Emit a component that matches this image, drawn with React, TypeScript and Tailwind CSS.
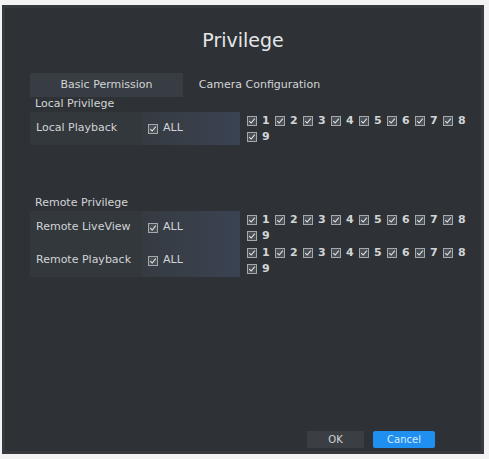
import React from "react";

const channels = [1, 2, 3, 4, 5, 6, 7, 8, 9];

function Check() {
  return (
    <span className="inline-flex h-[10px] w-[10px] shrink-0 items-center justify-center border border-[#a4a9ae] bg-[#4a4f55]">
      <svg viewBox="0 0 10 10" className="h-[8px] w-[8px]">
        <path d="M1.5 5.2 L4 7.5 L8.5 2" fill="none" stroke="#e2e4e6" strokeWidth="1.3" />
      </svg>
    </span>
  );
}

function Row({ label }: { label: string }) {
  return (
    <div className="flex h-[33px] items-stretch">
      <div className="flex w-[112px] items-center bg-[#33383d] pl-[6px]">{label}</div>
      <div className="flex w-[98px] items-center gap-[5px] bg-gradient-to-r from-[#363b41] to-[#3a4352] pl-[6px]">
        <Check />
        <span>ALL</span>
      </div>
      <div className="ml-[7px] flex w-[222px] flex-wrap content-center gap-x-[6px] leading-[16px]">
        {channels.map((c) => (
          <span key={c} className="flex items-center gap-[5px]">
            <Check />
            <span className="w-[7px] font-bold">{c}</span>
          </span>
        ))}
      </div>
    </div>
  );
}

export default function App() {
  return (
    <div className="h-[459px] w-[489px] bg-[#f3f3f3] pl-[2px] pt-[5px]" style={{ fontFamily: '"DejaVu Sans", sans-serif' }}>
      <div className="flex h-[449px] w-[482px] flex-col border-[3px] border-[#363a3e] bg-[#2e3236] text-[11px] text-[#d2d4d6]">
        <h1 className="mt-[20px] text-center text-[19px] leading-[24px] text-[#e4e6e8]">Privilege</h1>

        <div className="ml-[25px] mt-[21px] flex h-[24px]">
          <div className="flex w-[153px] items-center justify-center bg-[#383d43]">Basic Permission</div>
          <div className="flex w-[153px] items-center justify-center">Camera Configuration</div>
        </div>

        <div className="ml-[30px] leading-[14px]">Local Privilege</div>
        <div className="ml-[25px] mt-[1px]">
          <Row label="Local Playback" />
        </div>

        <div className="ml-[30px] mt-[51px] leading-[14px]">Remote Privilege</div>
        <div className="ml-[25px] mt-[1px] flex flex-col">
          <Row label="Remote LiveView" />
          <Row label="Remote Playback" />
        </div>

        <div className="mt-auto mb-[3px] mr-[46px] flex justify-end gap-[9px] text-[10px]">
          <button className="h-[17px] w-[57px] bg-[#3b3f43] text-[#d2d4d6]">OK</button>
          <button className="h-[17px] w-[62px] rounded-[2px] bg-[#1f8ff0] text-[#d8ebff]">Cancel</button>
        </div>
      </div>
    </div>
  );
}
